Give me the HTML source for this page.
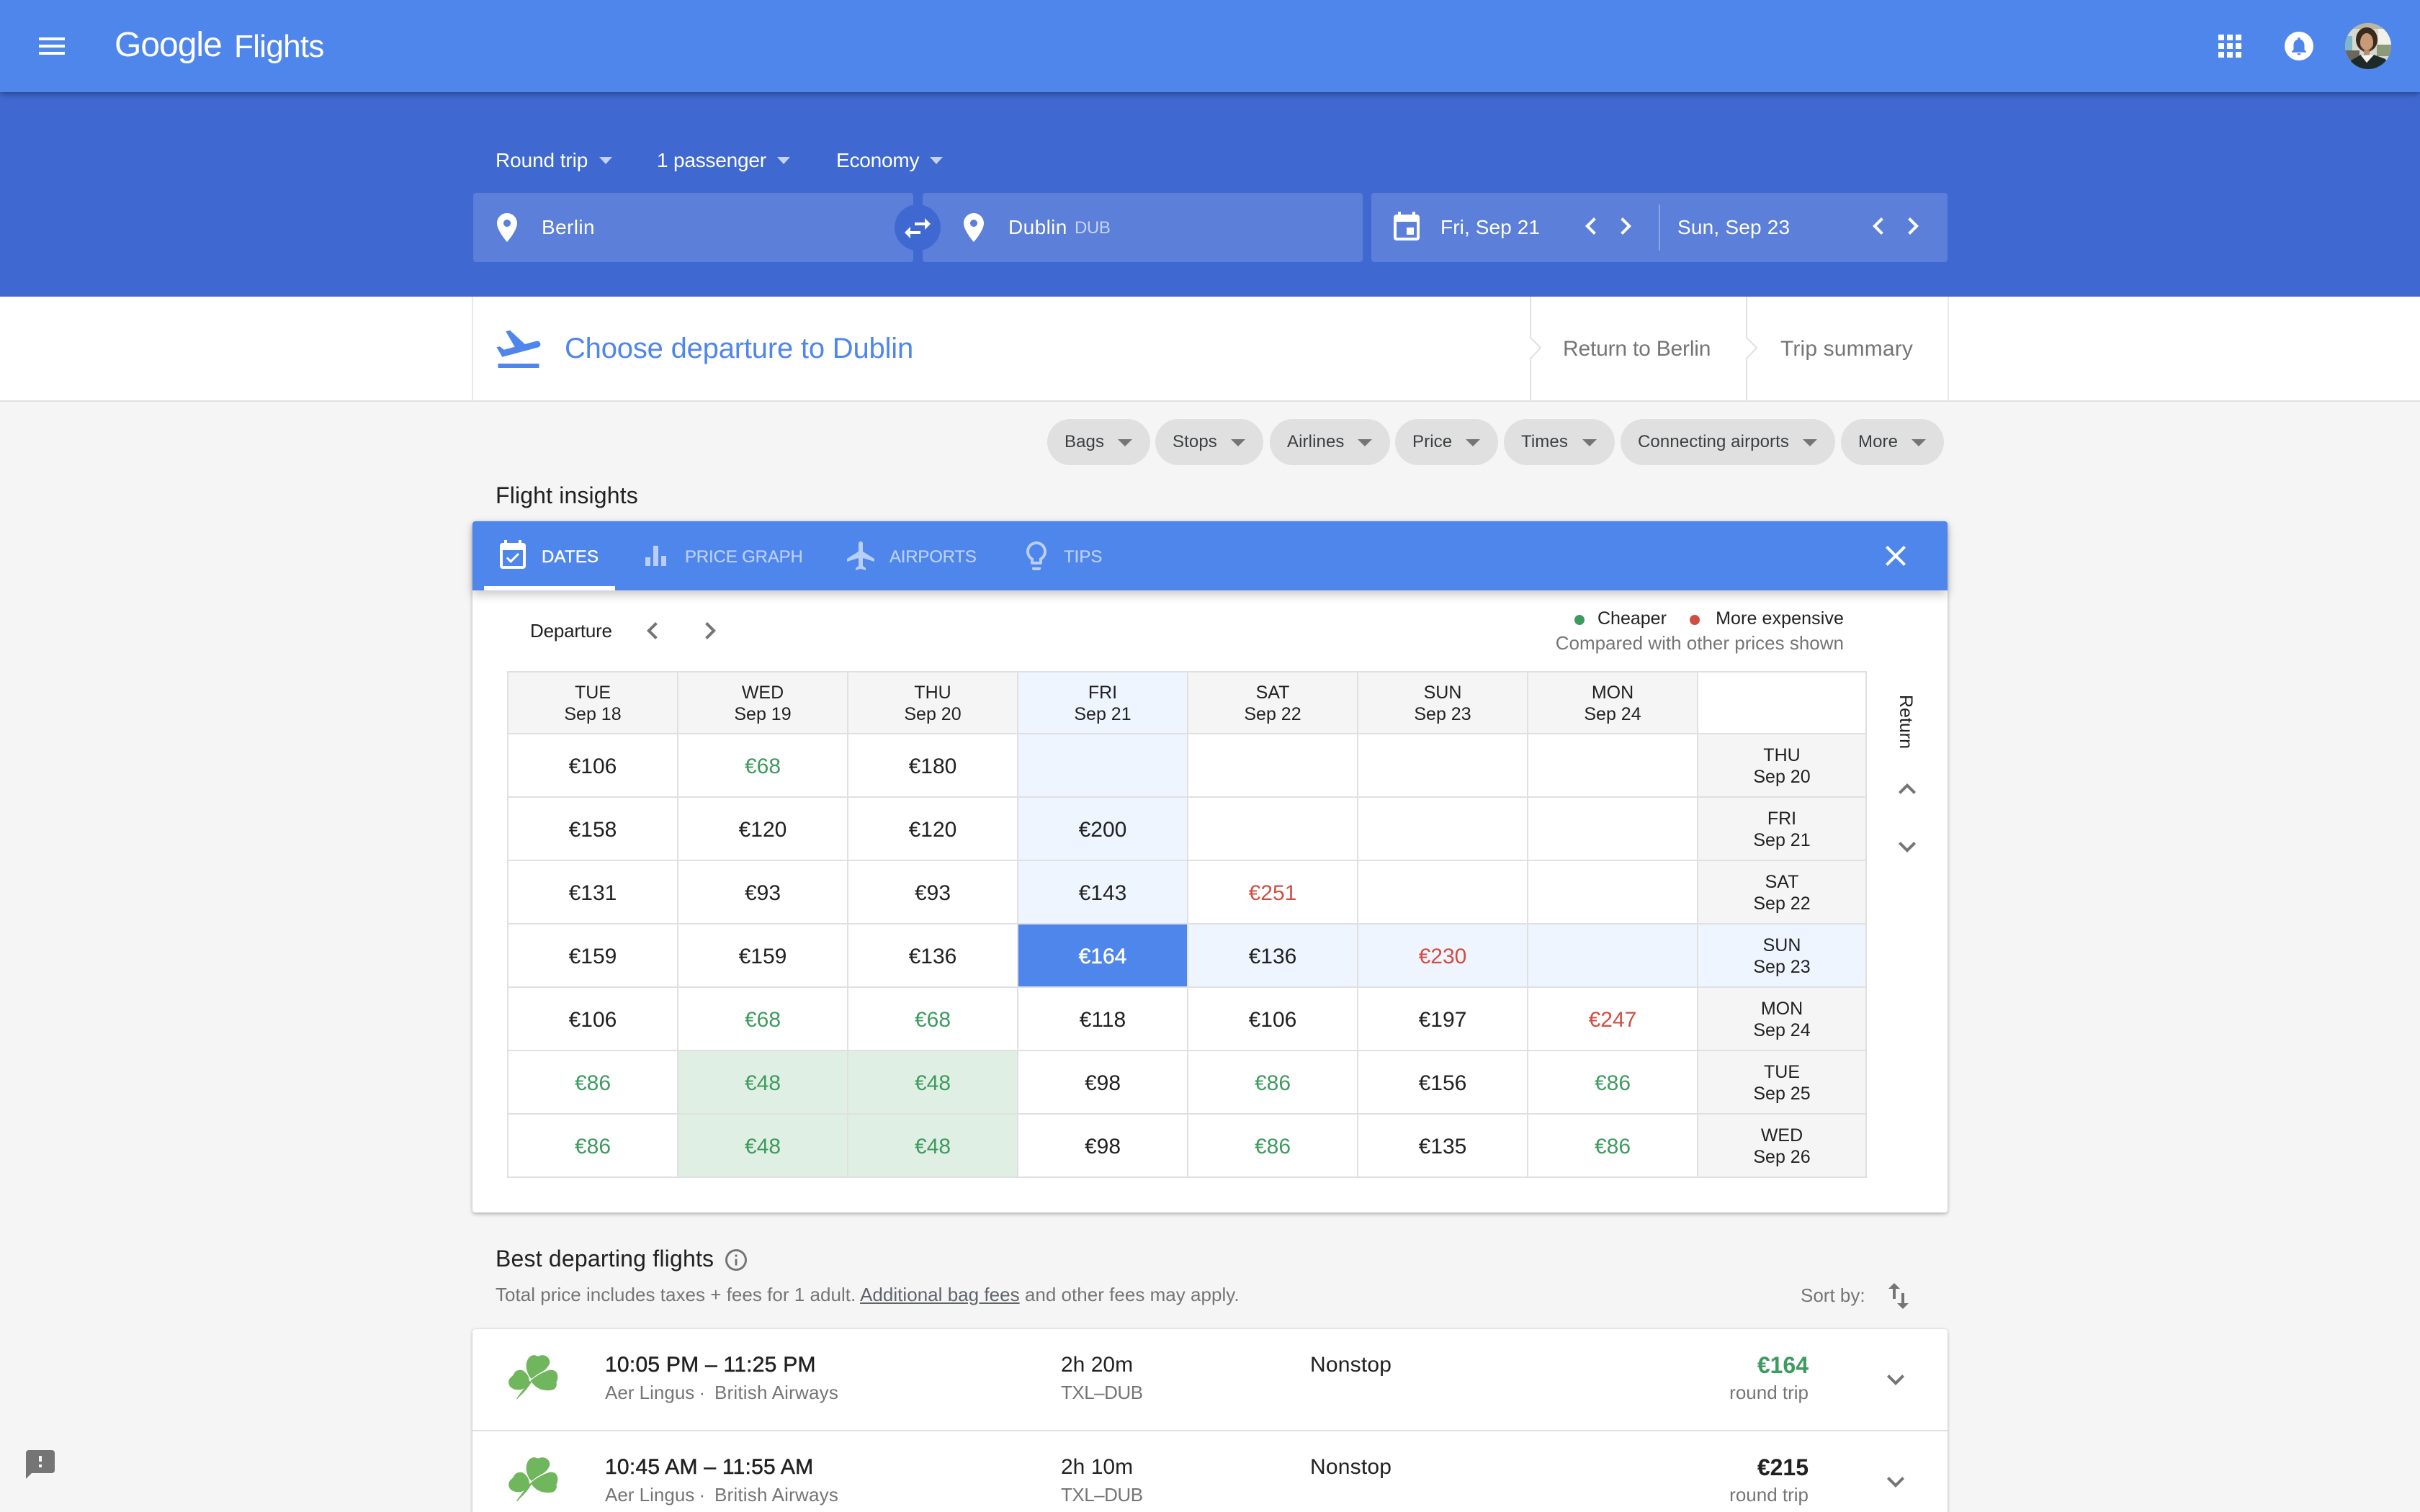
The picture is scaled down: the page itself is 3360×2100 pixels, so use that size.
<!DOCTYPE html>
<html lang="en"><head><meta charset="utf-8"><title>Google Flights</title>
<style>
html,body{margin:0;padding:0;width:3360px;height:2100px;overflow:hidden;background:#f5f5f5}
body{position:relative;font-family:"Liberation Sans",Arial,sans-serif;color:#212121}
.a{position:absolute}
.t{position:absolute;white-space:nowrap;line-height:1}
svg.i{position:absolute;width:48px;height:48px}
.w{color:#fff}.g{color:#757575}
.car{position:absolute;width:0;height:0;border-left:9px solid transparent;border-right:9px solid transparent;border-top:10px solid rgba(255,255,255,.7)}
.box{position:absolute;top:268px;height:96px;background:#5c7fd9;border-radius:4px}
.chip{position:absolute;top:582px;height:64px;background:#e0e0e0;border-radius:32px;line-height:64px;font-size:24px;letter-spacing:.1px;color:#3c4043;padding-left:24px;box-sizing:border-box;white-space:nowrap}
.chip:after{content:"";position:absolute;right:25px;top:28px;width:0;height:0;border-left:10px solid transparent;border-right:10px solid transparent;border-top:10px solid #757575}
.grid{position:absolute;left:704px;top:932px;width:1888px;height:704px;background:#e0e0e0;display:grid;grid-template-columns:repeat(7,234px) 232px;grid-template-rows:84px repeat(7,86px);gap:2px;padding:2px;box-sizing:border-box}
.grid div{background:#fff;text-align:center;font-size:30px;line-height:89px;color:#212121}
.grid .h{background:#f5f5f5;font-size:25px;line-height:30px;padding-top:13px;box-sizing:border-box}
.grid .hr{padding-top:14px}
.grid .b{background:#eef5fe}
.grid .s{background:#4f86ec;color:#fff;-webkit-text-stroke:.5px #fff}
.grid .c{color:#3e9b5f}
.grid .r{color:#d14d41}
.grid .f{background:#e0efe4;color:#3e9b5f}
</style></head><body>

<!-- blue band -->
<div class="a" style="left:0;top:128px;width:3360px;height:284px;background:#3f69d0"></div>
<!-- header -->
<div class="a" style="left:0;top:0;width:3360px;height:128px;background:#4f86ec;box-shadow:0 2px 8px rgba(0,0,0,.4)"></div>
<div class="a" style="left:54px;top:52px;width:36px;height:4px;background:#fff"></div>
<div class="a" style="left:54px;top:62px;width:36px;height:4px;background:#fff"></div>
<div class="a" style="left:54px;top:72px;width:36px;height:4px;background:#fff"></div>
<div class="t w" style="left:159px;top:39px;font-size:48px;letter-spacing:-1px">Google</div>
<div class="t w" style="left:325px;top:43px;font-size:44px;letter-spacing:-.7px">Flights</div>
<svg class="a" style="left:3080px;top:48px" width="32" height="32" fill="#fff"><rect width="8" height="8"/><rect x="12" width="8" height="8"/><rect x="24" width="8" height="8"/><rect y="12" width="8" height="8"/><rect x="12" y="12" width="8" height="8"/><rect x="24" y="12" width="8" height="8"/><rect y="24" width="8" height="8"/><rect x="12" y="24" width="8" height="8"/><rect x="24" y="24" width="8" height="8"/></svg>
<div class="a" style="left:3172px;top:44px;width:40px;height:40px;border-radius:50%;background:#fff"></div>
<svg class="a" style="left:3177px;top:49px" width="30" height="30" viewBox="0 0 24 24" fill="#4f86ec"><path d="M12 22c1.1 0 2-.9 2-2h-4c0 1.1.89 2 2 2zm6-6v-5c0-3.07-1.64-5.64-4.5-6.32V4c0-.83-.67-1.5-1.5-1.5s-1.5.67-1.5 1.5v.68C7.63 5.36 6 7.92 6 11v5l-2 2v1h16v-1l-2-2z"/></svg>
<svg class="a" style="left:3256px;top:32px" width="64" height="64" viewBox="0 0 64 64"><clipPath id="av"><circle cx="32" cy="32" r="32"/></clipPath><g clip-path="url(#av)"><rect width="64" height="64" fill="#d6d8cf"/><rect x="0" y="0" width="64" height="8" fill="#b9b7a3"/><rect x="0" y="18" width="10" height="22" fill="#7fb6c9"/><rect x="46" y="8" width="18" height="22" fill="#f1f1ea"/><rect x="44" y="30" width="20" height="16" fill="#8b9a78"/><rect x="0" y="38" width="20" height="14" fill="#6b665e"/><ellipse cx="30" cy="23" rx="15" ry="17" fill="#3a2a1c"/><ellipse cx="30" cy="27" rx="9" ry="13" fill="#c99a78"/><path d="M22 32q8 12 16 0l-1 6q-7 6-14 0z" fill="#5a4030"/><rect x="26" y="38" width="8" height="8" fill="#b88b6c"/><path d="M3 64 8 52 22 44 30 55 40 44 56 50 62 64z" fill="#1e2a28"/><path d="M22 45 40 44 30 55z" fill="#f4f4ef"/></g></svg>

<!-- selectors -->
<div class="t w" style="left:688px;top:209px;font-size:28px;letter-spacing:-.1px">Round trip</div>
<div class="car" style="left:832px;top:218px"></div>
<div class="t w" style="left:912px;top:209px;font-size:28px;letter-spacing:-.2px">1 passenger</div>
<div class="car" style="left:1079px;top:218px"></div>
<div class="t w" style="left:1161px;top:209px;font-size:28px;letter-spacing:-.2px">Economy</div>
<div class="car" style="left:1291px;top:218px"></div>

<div class="box" style="left:657px;width:611px"></div>
<div class="box" style="left:1281px;width:611px"></div>
<div class="box" style="left:1904px;width:800px"></div>
<div class="a" style="left:1242px;top:284px;width:64px;height:64px;border-radius:50%;background:#3f69d0"></div>
<svg class="i" style="left:1250px;top:293px" viewBox="0 0 24 24" fill="#fff"><path d="M6.99 11L3 15l3.99 4v-3H14v-2H6.99v-3zM21 9l-3.99-4v3H10v2h7.01v3L21 9z"/></svg>
<svg class="i" style="left:680px;top:292px" viewBox="0 0 24 24" fill="#fff"><path d="M12 2C8.13 2 5 5.13 5 9c0 5.25 7 13 7 13s7-7.75 7-13c0-3.87-3.13-7-7-7zm0 9.5c-1.38 0-2.5-1.12-2.5-2.5s1.12-2.5 2.5-2.5 2.5 1.12 2.5 2.5-1.12 2.5-2.5 2.5z"/></svg>
<div class="t w" style="left:752px;top:302px;font-size:28px;letter-spacing:.4px">Berlin</div>
<svg class="i" style="left:1328px;top:292px" viewBox="0 0 24 24" fill="#fff"><path d="M12 2C8.13 2 5 5.13 5 9c0 5.25 7 13 7 13s7-7.75 7-13c0-3.87-3.13-7-7-7zm0 9.5c-1.38 0-2.5-1.12-2.5-2.5s1.12-2.5 2.5-2.5 2.5 1.12 2.5 2.5-1.12 2.5-2.5 2.5z"/></svg>
<div class="t w" style="left:1400px;top:302px;font-size:28px;letter-spacing:.4px">Dublin</div>
<div class="t" style="left:1492px;top:305px;font-size:24px;color:rgba(255,255,255,.65);letter-spacing:-.4px">DUB</div>
<svg class="i" style="left:1929px;top:292px" viewBox="0 0 24 24" fill="#fff"><path d="M17 12h-5v5h5v-5zM16 1v2H8V1H6v2H5c-1.11 0-1.99.9-1.99 2L3 19c0 1.1.89 2 2 2h14c1.1 0 2-.9 2-2V5c0-1.1-.9-2-2-2h-1V1h-2zm3 18H5V8h14v11z"/></svg>
<div class="t w" style="left:2000px;top:302px;font-size:28px;letter-spacing:.1px">Fri, Sep 21</div>
<svg class="i" style="left:2185px;top:290px" viewBox="0 0 24 24" fill="#fff"><path d="M15.41 7.41L14 6l-6 6 6 6 1.41-1.41L10.83 12z"/></svg>
<svg class="i" style="left:2233px;top:290px" viewBox="0 0 24 24" fill="#fff"><path d="M10 6L8.59 7.41 13.17 12l-4.58 4.59L10 18l6-6z"/></svg>
<div class="a" style="left:2303px;top:284px;width:2px;height:64px;background:rgba(255,255,255,.3)"></div>
<div class="t w" style="left:2329px;top:302px;font-size:28px;letter-spacing:.2px">Sun, Sep 23</div>
<svg class="i" style="left:2584px;top:290px" viewBox="0 0 24 24" fill="#fff"><path d="M15.41 7.41L14 6l-6 6 6 6 1.41-1.41L10.83 12z"/></svg>
<svg class="i" style="left:2632px;top:290px" viewBox="0 0 24 24" fill="#fff"><path d="M10 6L8.59 7.41 13.17 12l-4.58 4.59L10 18l6-6z"/></svg>

<!-- steps bar -->
<div class="a" style="left:0;top:412px;width:3360px;height:144px;background:#fff;border-bottom:2px solid #e0e0e0"></div>
<div class="a" style="left:655px;top:412px;width:2px;height:144px;background:#e8e8e8"></div>
<div class="a" style="left:2704px;top:412px;width:2px;height:144px;background:#e8e8e8"></div>
<svg class="a" style="left:2124px;top:412px" width="18" height="144" fill="#fff" stroke="#e0e0e0" stroke-width="2"><path d="M1 0V57L15 71 1 86V144"/></svg>
<svg class="a" style="left:2424px;top:412px" width="18" height="144" fill="#fff" stroke="#e0e0e0" stroke-width="2"><path d="M1 0V57L15 71 1 86V144"/></svg>
<svg class="a" style="left:683.5px;top:448px" width="72" height="72" viewBox="0 0 24 24" fill="#4f86ec"><path d="M2.5 19h19v2h-19zm19.57-9.36c-.21-.8-1.04-1.28-1.84-1.06L14.92 10l-6.9-6.43-1.93.51 4.14 7.17-4.97 1.33-1.97-1.54-1.45.39 1.82 3.16.77 1.33 1.6-.43 5.31-1.42 4.35-1.16L21 11.49c.81-.23 1.28-1.05 1.07-1.85z"/></svg>
<div class="t" style="left:784px;top:464px;font-size:40px;color:#4f86ec;letter-spacing:-.2px">Choose departure to Dublin</div>
<div class="t g" style="left:2170px;top:470px;font-size:30px;letter-spacing:-.2px">Return to Berlin</div>
<div class="t g" style="left:2472px;top:470px;font-size:30px;letter-spacing:.15px">Trip summary</div>

<!-- chips -->
<div class="chip" style="left:1454px;width:143px">Bags</div>
<div class="chip" style="left:1604px;width:150px">Stops</div>
<div class="chip" style="left:1763px;width:167px">Airlines</div>
<div class="chip" style="left:1937px;width:143px">Price</div>
<div class="chip" style="left:2088px;width:154px">Times</div>
<div class="chip" style="left:2250px;width:298px">Connecting airports</div>
<div class="chip" style="left:2556px;width:143px">More</div>

<div class="t" style="left:688px;top:672px;font-size:32px;letter-spacing:.15px">Flight insights</div>

<!-- insights card -->
<div class="a" style="left:656px;top:724px;width:2048px;height:960px;background:#fff;border-radius:4px;box-shadow:0 2px 6px rgba(0,0,0,.3)"></div>
<div class="a" style="left:656px;top:724px;width:2048px;height:96px;background:#4f86ec;border-radius:4px 4px 0 0;box-shadow:0 6px 14px rgba(0,0,0,.22)"></div>
<div class="a" style="left:672px;top:814px;width:182px;height:6px;background:#fff"></div>
<svg class="i" style="left:688px;top:748px" viewBox="0 0 24 24" fill="#fff"><path d="M16.53 11.06L15.47 10l-4.88 4.88-2.12-2.12-1.06 1.06L10.59 17l5.94-5.94zM19 3h-1V1h-2v2H8V1H6v2H5c-1.11 0-1.99.9-1.99 2L3 19c0 1.1.89 2 2 2h14c1.1 0 2-.9 2-2V5c0-1.1-.9-2-2-2zm0 16H5V8h14v11z"/></svg>
<div class="t w" style="left:752px;top:762px;font-size:24px;letter-spacing:.2px;-webkit-text-stroke:.4px #fff">DATES</div>
<svg class="a" style="left:896px;top:758px" width="29" height="28" fill="#b9cff7"><rect y="16" width="7" height="12"/><rect x="11" width="7" height="28"/><rect x="22" y="14" width="7" height="14"/></svg>
<div class="t" style="left:951px;top:762px;font-size:24px;color:#b9cff7;letter-spacing:-.15px;-webkit-text-stroke:.3px #b9cff7">PRICE GRAPH</div>
<svg class="i" style="left:1172px;top:748px" viewBox="0 0 24 24" fill="#b9cff7"><path d="M21 16v-2l-8-5V3.5c0-.83-.67-1.5-1.5-1.5S10 2.67 10 3.5V9l-8 5v2l8-2.5V19l-2 1.5V22l3.5-1 3.5 1v-1.5L13 19v-5.5l8 2.5z"/></svg>
<div class="t" style="left:1235px;top:762px;font-size:24px;color:#b9cff7;letter-spacing:-.2px;-webkit-text-stroke:.3px #b9cff7">AIRPORTS</div>
<svg class="i" style="left:1415px;top:748px" viewBox="0 0 24 24" fill="#b9cff7"><path d="M9 21c0 .55.45 1 1 1h4c.55 0 1-.45 1-1v-1H9v1zm3-19C8.14 2 5 5.14 5 9c0 2.38 1.19 4.47 3 5.74V17c0 .55.45 1 1 1h6c.55 0 1-.45 1-1v-2.26c1.81-1.27 3-3.36 3-5.74 0-3.86-3.14-7-7-7zm2.85 11.1l-.85.6V16h-4v-2.3l-.85-.6C7.8 12.16 7 10.63 7 9c0-2.76 2.24-5 5-5s5 2.24 5 5c0 1.63-.8 3.16-2.15 4.1z"/></svg>
<div class="t" style="left:1477px;top:762px;font-size:24px;color:#b9cff7;letter-spacing:0;-webkit-text-stroke:.3px #b9cff7">TIPS</div>
<svg class="i" style="left:2608px;top:748px" viewBox="0 0 24 24" fill="#fff"><path d="M19 6.41L17.59 5 12 10.59 6.41 5 5 6.41 10.59 12 5 17.59 6.41 19 12 13.41 17.59 19 19 17.59 13.41 12z"/></svg>

<div class="t" style="left:736px;top:863px;font-size:26px;letter-spacing:-.2px">Departure</div>
<svg class="i" style="left:882px;top:852px" viewBox="0 0 24 24" fill="#757575"><path d="M15.41 7.41L14 6l-6 6 6 6 1.41-1.41L10.83 12z"/></svg>
<svg class="i" style="left:962px;top:852px" viewBox="0 0 24 24" fill="#757575"><path d="M10 6L8.59 7.41 13.17 12l-4.58 4.59L10 18l6-6z"/></svg>
<div class="a" style="left:2186px;top:854px;width:14px;height:14px;border-radius:50%;background:#3e9b5f"></div>
<div class="t" style="left:2218px;top:847px;font-size:25px">Cheaper</div>
<div class="a" style="left:2346px;top:854px;width:14px;height:14px;border-radius:50%;background:#d14d41"></div>
<div class="t" style="right:800px;top:847px;font-size:25px;letter-spacing:.1px">More expensive</div>
<div class="t g" style="right:800px;top:880px;font-size:26px">Compared with other prices shown</div>

<div class="grid">
<div class="h">TUE<br>Sep 18</div><div class="h">WED<br>Sep 19</div><div class="h">THU<br>Sep 20</div><div class="h b">FRI<br>Sep 21</div><div class="h">SAT<br>Sep 22</div><div class="h">SUN<br>Sep 23</div><div class="h">MON<br>Sep 24</div><div></div>
<div>€106</div><div class="c">€68</div><div>€180</div><div class="b"></div><div></div><div></div><div></div><div class="h hr">THU<br>Sep 20</div>
<div>€158</div><div>€120</div><div>€120</div><div class="b">€200</div><div></div><div></div><div></div><div class="h hr">FRI<br>Sep 21</div>
<div>€131</div><div>€93</div><div>€93</div><div class="b">€143</div><div class="r">€251</div><div></div><div></div><div class="h hr">SAT<br>Sep 22</div>
<div>€159</div><div>€159</div><div>€136</div><div class="s">€164</div><div class="b">€136</div><div class="b r">€230</div><div class="b"></div><div class="h hr b">SUN<br>Sep 23</div>
<div>€106</div><div class="c">€68</div><div class="c">€68</div><div>€118</div><div>€106</div><div>€197</div><div class="r">€247</div><div class="h hr">MON<br>Sep 24</div>
<div class="c">€86</div><div class="f">€48</div><div class="f">€48</div><div>€98</div><div class="c">€86</div><div>€156</div><div class="c">€86</div><div class="h hr">TUE<br>Sep 25</div>
<div class="c">€86</div><div class="f">€48</div><div class="f">€48</div><div>€98</div><div class="c">€86</div><div>€135</div><div class="c">€86</div><div class="h hr">WED<br>Sep 26</div>
</div>

<div class="t" style="left:2633px;top:965px;font-size:25px;line-height:26px;writing-mode:vertical-rl">Return</div>
<svg class="i" style="left:2624px;top:1072px" viewBox="0 0 24 24" fill="#757575"><path d="M7.41 15.41L12 10.83l4.59 4.58L18 14l-6-6-6 6z"/></svg>
<svg class="i" style="left:2624px;top:1152px" viewBox="0 0 24 24" fill="#757575"><path d="M7.41 8.59L12 13.17l4.59-4.58L18 10l-6 6-6-6 1.41-1.41z"/></svg>

<!-- results header -->
<div class="t" style="left:688px;top:1732px;font-size:32px;letter-spacing:.2px">Best departing flights</div>
<svg class="a" style="left:1004px;top:1732px" width="36" height="36" viewBox="0 0 24 24" fill="#757575"><path d="M11 17h2v-6h-2v6zm1-15C6.48 2 2 6.48 2 12s4.48 10 10 10 10-4.48 10-10S17.52 2 12 2zm0 18c-4.41 0-8-3.59-8-8s3.59-8 8-8 8 3.59 8 8-3.59 8-8 8zM11 9h2V7h-2v2z"/></svg>
<div class="t g" style="left:688px;top:1785px;font-size:26px;letter-spacing:.02px">Total price includes taxes + fees for 1 adult. <span style="text-decoration:underline;color:#5f6368">Additional bag fees</span> and other fees may apply.</div>
<div class="t g" style="left:2500px;top:1786px;font-size:26px">Sort by:</div>
<svg class="i" style="left:2612px;top:1776px" viewBox="0 0 24 24" fill="#757575"><path d="M16 17.01V10h-2v7.01h-3L15 21l4-3.99h-3zM9 3L5 6.99h3V14h2V6.99h3L9 3z"/></svg>

<!-- flight list -->
<div class="a" style="left:656px;top:1846px;width:2048px;height:300px;background:#fff;border-radius:4px 4px 0 0;box-shadow:0 1px 4px rgba(0,0,0,.3)"></div>
<div class="a" style="left:656px;top:1986px;width:2048px;height:2px;background:#e0e0e0"></div>

<svg class="a" style="left:695px;top:1870px" width="90" height="85" viewBox="0 0 270 255" fill="#70b65c" stroke="#70b65c" stroke-width="4"><path d="M122 125Q100 85 115 55 125 38 142 38 152 44 160 42 175 34 192 44 206 56 202 72 192 95 165 108 148 116 130 132z"/><path d="M128 142Q165 112 205 100 228 98 234 115 240 132 230 150 236 166 220 178 195 186 165 176 140 165 128 142z"/><path d="M118 142Q115 115 90 101 70 98 60 110 54 124 42 132 30 148 40 165 55 182 85 178 108 170 118 150z"/><path d="M120 148 68 218 80 205Q110 178 128 146z"/></svg>
<div class="t" style="left:840px;top:1881px;font-size:30px;letter-spacing:.25px;-webkit-text-stroke:.5px #212121">10:05 PM – 11:25 PM</div>
<div class="t g" style="left:840px;top:1921px;font-size:26px">Aer Lingus <span style="margin-left:-1px">·</span></div>
<div class="t g" style="left:992px;top:1921px;font-size:26px;letter-spacing:.2px">British Airways</div>
<div class="t" style="left:1473px;top:1881px;font-size:30px">2h 20m</div>
<div class="t g" style="left:1473px;top:1921px;font-size:26px;letter-spacing:-.5px">TXL–DUB</div>
<div class="t" style="left:1819px;top:1881px;font-size:30px;letter-spacing:.2px">Nonstop</div>
<div class="t" style="right:849px;top:1880px;font-size:32px;font-weight:bold;color:#3e9b5f">€164</div>
<div class="t g" style="right:849px;top:1921px;font-size:26px">round trip</div>
<svg class="i" style="left:2608px;top:1892px" viewBox="0 0 24 24" fill="#757575"><path d="M7.41 8.59L12 13.17l4.59-4.58L18 10l-6 6-6-6 1.41-1.41z"/></svg>

<svg class="a" style="left:695px;top:2012px" width="90" height="85" viewBox="0 0 270 255" fill="#70b65c" stroke="#70b65c" stroke-width="4"><path d="M122 125Q100 85 115 55 125 38 142 38 152 44 160 42 175 34 192 44 206 56 202 72 192 95 165 108 148 116 130 132z"/><path d="M128 142Q165 112 205 100 228 98 234 115 240 132 230 150 236 166 220 178 195 186 165 176 140 165 128 142z"/><path d="M118 142Q115 115 90 101 70 98 60 110 54 124 42 132 30 148 40 165 55 182 85 178 108 170 118 150z"/><path d="M120 148 68 218 80 205Q110 178 128 146z"/></svg>
<div class="t" style="left:840px;top:2023px;font-size:30px;letter-spacing:.25px;-webkit-text-stroke:.5px #212121">10:45 AM – 11:55 AM</div>
<div class="t g" style="left:840px;top:2063px;font-size:26px">Aer Lingus <span style="margin-left:-1px">·</span></div>
<div class="t g" style="left:992px;top:2063px;font-size:26px;letter-spacing:.2px">British Airways</div>
<div class="t" style="left:1473px;top:2023px;font-size:30px">2h 10m</div>
<div class="t g" style="left:1473px;top:2063px;font-size:26px;letter-spacing:-.5px">TXL–DUB</div>
<div class="t" style="left:1819px;top:2023px;font-size:30px;letter-spacing:.2px">Nonstop</div>
<div class="t" style="right:849px;top:2022px;font-size:32px;font-weight:bold">€215</div>
<div class="t g" style="right:849px;top:2063px;font-size:26px">round trip</div>
<svg class="i" style="left:2608px;top:2034px" viewBox="0 0 24 24" fill="#757575"><path d="M7.41 8.59L12 13.17l4.59-4.58L18 10l-6 6-6-6 1.41-1.41z"/></svg>

<svg class="i" style="left:32px;top:2010px" viewBox="0 0 24 24" fill="#757575"><path d="M20 2H4c-1.1 0-1.99.9-1.99 2L2 22l4-4h14c1.1 0 2-.9 2-2V4c0-1.1-.9-2-2-2zm-7 12h-2v-2h2v2zm0-4h-2V6h2v4z"/></svg>
</body></html>
